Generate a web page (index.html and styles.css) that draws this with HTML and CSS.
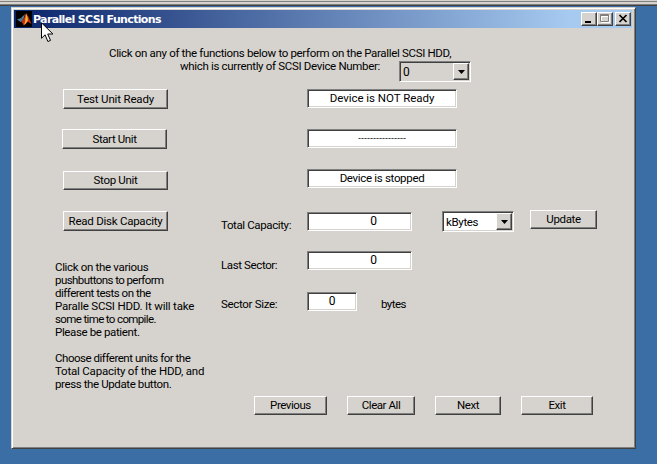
FILE: index.html
```html
<!DOCTYPE html>
<html lang="en">
<head>
<meta charset="utf-8">
<title>Parallel SCSI Functions</title>
<link rel="stylesheet" href="styles.css">
</head>
<body>
<div class="strip"></div>
<main class="window">
  <header class="titlebar">
    <svg class="logo" width="16" height="16" viewBox="0 0 16 16"><rect width="16" height="16" fill="#000"/><path d="M1 8.500l4-1.500 2 2.500-2.500 1.500z" fill="#487c9e"/><path d="M5 7l4-4-2 6.500z" fill="#5b7f8c"/><path d="M5 11l2-2 2-4 1-3 2 3 3.500 8-3-2-2 .5-3 3-1-2.500z" fill="#c52c12"/><path d="M9 11l1-8.500 1.500 3.500.5 3-2 3.500-2 1.500z" fill="#f3b52c"/></svg>
    <h1>Parallel SCSI Functions</h1>
    <div class="controls">
      <span class="ctl"><svg width="14" height="12"><rect x="3" y="8" width="6" height="2"/></svg></span>
      <span class="ctl max"><svg width="14" height="12"><path d="M3.500 2.500h8v7h-8z M3 3.500h9" fill="none" stroke="#fff"/><path d="M2.500 1.500h8v7h-8z M2 2.500h9" fill="none" stroke="#808080"/></svg></span>
      <span class="ctl close"><svg width="14" height="12"><path d="M3.500 2l7 7M10.500 2l-7 7" stroke="#000" stroke-width="1.700"/></svg></span>
    </div>
  </header>
  <section class="intro">
    <p><span class="i1">Click on any of the functions below to perform on the Parallel SCSI HDD,</span><br><span class="i2">which is currently of SCSI Device Number:</span></p>
    <div class="combo off"><span>0</span><i><svg width="7" height="4"><path d="M0 0h7L3.500 4z"/></svg></i></div>
  </section>
  <div class="columns">
    <section class="left">
      <div class="btn test"><span>Test Unit Ready</span></div>
      <div class="btn start"><span>Start Unit</span></div>
      <div class="btn stop"><span>Stop Unit</span></div>
      <div class="btn read"><span>Read Disk Capacity</span></div>
      <p class="note"><span class="n1">Click on the various</span><br><span class="n2">pushbuttons to perform</span><br><span class="n3">different tests on the</span><br><span class="n4">Paralle SCSI HDD. It will take</span><br><span class="n5">some time to compile.</span><br><span class="n6">Please be patient.</span><br><br><span class="n7">Choose different units for the</span><br><span class="n8">Total Capacity of the HDD, and</span><br><span class="n9">press the Update button.</span></p>
    </section>
    <section class="right">
      <div class="field status"><span class="s1">Device is NOT Ready</span></div>
      <div class="field status"><span class="s2">----------------</span></div>
      <div class="field status"><span class="s3">Device is stopped</span></div>
      <div class="row total">
        <label><span class="l1">Total Capacity:</span></label>
        <div class="field number">0</div>
        <div class="combo units"><span>kBytes</span><i><svg width="7" height="4"><path d="M0 0h7L3.500 4z"/></svg></i></div>
        <div class="btn update"><span>Update</span></div>
      </div>
      <div class="row last">
        <label><span class="l2">Last Sector:</span></label>
        <div class="field number">0</div>
      </div>
      <div class="row size">
        <label><span class="l3">Sector Size:</span></label>
        <div class="field small">0</div>
        <span class="bytes">bytes</span>
      </div>
    </section>
  </div>
  <nav class="actions">
    <div class="btn prev"><span>Previous</span></div>
    <div class="btn clear"><span>Clear All</span></div>
    <div class="btn next"><span>Next</span></div>
    <div class="btn exit"><span>Exit</span></div>
  </nav>
</main>
<svg class="cursor" width="13" height="21" viewBox="0 0 13 21"><path d="M.5.8v15.500l3.600-3.500 2.800 6.700 2.600-1.100-2.800-6.400h5.200z" fill="#fff" stroke="#000"/></svg>
</body>
</html>
```
FILE: styles.css
```css
* { box-sizing: border-box; }
body {
  margin: 0;
  width: 657px;
  height: 464px;
  overflow: hidden;
  background: #3a6ea5;
  color: #000;
  font: 11.5px/13px Roboto, "Liberation Sans", sans-serif;
  letter-spacing: -0.35px;
  white-space: nowrap;
}
h1, p { margin: 0; }
.strip {
  height: 6px;
  background: linear-gradient(#d6d3ce 1px, #808080 1px 2px, #d6d3ce 2px 4px, #808080 4px 5px, #404040 5px);
}
.window {
  width: 625px;
  height: 442px;
  margin: 1px 0 0 11px;
  background: #d6d3ce;
  border: 1px solid;
  border-color: #d6d3ce #404040 #404040 #d6d3ce;
  box-shadow: inset 1px 1px #fff, inset -1px -1px #808080;
  padding: 2px;
}
.titlebar {
  display: flex;
  align-items: center;
  width: 618px;
  height: 18px;
  background: linear-gradient(90deg, #0a246a, #a6caf0 90%);
}
.logo { margin-left: 2px; }
h1 {
  margin-left: 1px;
  color: #fff;
  font: bold 11px/16px "DejaVu Sans", sans-serif;
  letter-spacing: -0.65px;
  padding-top: 1px;
}
.controls { display: flex; margin-left: auto; padding-right: 1px; }
.ctl {
  width: 16px;
  height: 14px;
  background: #d6d3ce;
  border: 1px solid;
  border-color: #fff #404040 #404040 #fff;
  box-shadow: inset -1px -1px #808080;
}
.ctl svg, .combo svg, .logo { display: block; }
.close { margin-left: 2px; }
.btn, .field { display: flex; justify-content: center; align-items: center; }
.btn {
  height: 20px;
  border: 1px solid;
  border-color: #fff #404040 #404040 #fff;
  box-shadow: inset -1px -1px #808080;
}
.field {
  height: 19px;
  background: #fff;
  border: 1px solid;
  border-color: #808080 #fff #fff #808080;
  box-shadow: inset 1px 1px #404040, inset -1px -1px #d6d3ce;
}
.combo {
  display: flex;
  width: 72px;
  height: 21px;
  padding: 1px;
  background: #fff;
  border: 1px solid;
  border-color: #808080 #fff #fff #808080;
  box-shadow: inset 1px 1px #404040, inset -1px -1px #d6d3ce;
}
.combo.off { background: #d6d3ce; }
.combo span { flex: 1; padding-left: 2px; line-height: 18px; }
.combo i {
  display: grid;
  place-items: center;
  width: 16px;
  height: 17px;
  background: #d6d3ce;
  border: 1px solid;
  border-color: #fff #404040 #404040 #fff;
  box-shadow: inset -1px -1px #808080;
}
.intro { display: flex; height: 54px; padding: 18px 0 0 95px; }
.intro p { width: 342px; padding-top: 1px; text-align: center; }
.intro .combo { margin: 15px 0 0 -52px; }
.columns { display: flex; height: 314px; }
.left { width: 206px; padding: 7px 0 0 41px; }
.left .btn { width: 105px; margin-left: 8px; }
.left .start { margin: 20px 0 0 7px; }
.left .stop { height: 19px; margin-top: 22px; }
.left .read { margin-top: 21px; }
.note { margin-top: 30px; }
.right { padding-top: 7px; }
.status { width: 150px; margin: 0 0 21px 87px; }
.row { display: flex; height: 19px; }
.row label { width: 87px; padding: 7px 0 0 1px; }
.total { margin-top: 24px; }
.last { margin-top: 20px; }
.last label { padding-top: 8px; }
.size { margin-top: 22px; }
.size label { padding-top: 6px; }
.number { width: 105px; padding-left: 28px; }
.small { width: 50px; }
.number, .small, .off { font-size: 12px; }
.bytes { margin: 6px 0 0 24px; letter-spacing: -0.56px; }
.units { margin: -1px 0 0 30px; }
.update { width: 67px; margin: -2px 0 0 16px; }
.row .update { height: 19px; }
.actions { display: flex; padding-left: 240px; letter-spacing: -0.44px; }
.actions .btn { height: 19px; }
.prev { width: 73px; }
.clear { width: 68px; margin-left: 20px; }
.next { width: 66px; margin-left: 20px; }
.exit { width: 72px; margin-left: 20px; }
.cursor { position: absolute; left: 41px; top: 22px; }

/* Tracking of the individual captions */
.i1, .n1 { letter-spacing: -0.33px; }
.i2 { letter-spacing: -0.32px; }
.n2 { letter-spacing: -0.57px; }
.n3 { letter-spacing: -0.49px; }
.n4, .n8 { letter-spacing: -0.2px; }
.n5 { letter-spacing: -0.63px; }
.n6 { letter-spacing: -0.37px; }
.n7 { letter-spacing: -0.47px; }
.n9 { letter-spacing: -0.39px; }
.test { letter-spacing: -0.17px; }
.start { letter-spacing: -0.39px; }
.stop { letter-spacing: -0.31px; }
.read { letter-spacing: -0.24px; }
.s1 { letter-spacing: -0.03px; }
.s2 { font: 9px/13px "Liberation Sans", sans-serif; letter-spacing: 0; }
.s3, .l3 { letter-spacing: -0.32px; }
.l1, .l2 { letter-spacing: -0.38px; }
```
